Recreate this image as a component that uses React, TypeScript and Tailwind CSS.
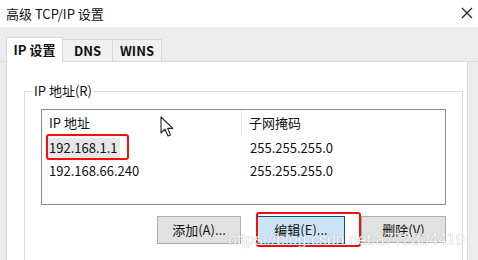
import React from 'react';

const font = { fontFamily: '"Noto Sans CJK SC", "Noto Sans", sans-serif' };

const Cursor: React.FC = () => (
    <svg className="absolute left-[160px] top-[116px]" width="15" height="22" viewBox="0 0 15 22">
        <path d="M1 1 L1 17 L5 13.2 L8 20 L10.5 19 L7.6 12.4 L12.8 12.4 Z" fill="#fff" stroke="#222" strokeWidth="1.1" strokeLinejoin="round" />
    </svg>
);

const App: React.FC = () => {
    return (
        <div className="relative w-[478px] h-[260px] overflow-hidden bg-[#ececec] text-[#111] flex flex-col" style={font}>
            {/* title bar */}
            <header className="h-[27px] shrink-0 bg-white flex items-center justify-between pl-[6px] pr-[4px]">
                <span className="text-[13px] leading-none">高级 TCP/IP 设置</span>
                <svg width="14" height="14" viewBox="0 0 14 14" className="mt-[-2px]">
                    <path d="M2 2 L12 12 M12 2 L2 12" stroke="#222" strokeWidth="1.2" />
                </svg>
            </header>

            {/* tabs */}
            <div className="h-[35px] shrink-0 flex items-end pl-[6px] border-b border-[#d9d9d9] relative z-10">
                <div className="h-[25px] w-[57px] bg-white border border-b-0 border-[#d9d9d9] flex items-center justify-center text-[13px] font-semibold mb-[-1px]">IP 设置</div>
                <div className="h-[22px] w-[50px] bg-[#f0f0f0] border border-l-0 border-b-0 border-[#d9d9d9] flex items-center justify-center text-[13px] font-semibold">DNS</div>
                <div className="h-[22px] w-[49px] bg-[#f0f0f0] border border-l-0 border-b-0 border-[#d9d9d9] flex items-center justify-center text-[13px] font-semibold">WINS</div>
            </div>

            {/* panel */}
            <div className="flex-1 min-h-0 overflow-hidden bg-white ml-[6px] mr-[10px] border-l border-r border-[#d9d9d9] pt-[29px] pl-[17px] pr-[4px]">
                <div className="relative border border-[#dcdcdc] h-[200px] pt-[17px] px-[16px]">
                    <span className="absolute left-[8px] top-[-10px] bg-white px-[1px] text-[13px] leading-[18px]">IP 地址(R)</span>

                    {/* list */}
                    <div className="h-[96px] border border-[#8c8c8c] bg-white text-[13px]">
                        <div className="flex h-[26px] items-center">
                            <div className="w-[200px] pl-[7px] border-r border-[#e5e5e5] h-full flex items-center">IP 地址</div>
                            <div className="pl-[7px]">子网掩码</div>
                        </div>
                        <div className="flex h-[23px] items-center">
                            <div className="w-[201px] pl-[5px]">
                                <span className="inline-block bg-[#e6e6e6] px-[2px] leading-[20px]">192.168.1.1</span>
                            </div>
                            <div className="pl-[7px]">255.255.255.0</div>
                        </div>
                        <div className="flex h-[23px] items-center">
                            <div className="w-[201px] pl-[7px]">192.168.66.240</div>
                            <div className="pl-[7px]">255.255.255.0</div>
                        </div>
                    </div>

                    {/* buttons */}
                    <div className="flex justify-end gap-[16px] mt-[11px] text-[13px]">
                        <button className="w-[84px] h-[28px] bg-[#e1e1e1] border border-[#adadad]">添加(A)...</button>
                        <button className="w-[88px] h-[28px] bg-[#cce4f7] border border-[#005499]">编辑(E)...</button>
                        <button className="w-[85px] h-[27px] bg-[#e1e1e1] border border-[#adadad]">删除(V)</button>
                    </div>
                </div>
            </div>

            {/* annotations */}
            <div className="absolute left-[46px] top-[134px] w-[83px] h-[26px] border-2 border-[#f01010] rounded-[3px]" />
            <div className="absolute left-[256px] top-[212px] w-[105px] h-[35px] border-2 border-[#f01010] rounded-[3px]" />
            <Cursor />

            {/* watermark */}
            <div className="absolute left-[228px] top-[232px] text-[16px] leading-none text-white/90 [text-shadow:0_0_1px_rgba(0,0,0,0.35)]" style={{ fontFamily: '"Liberation Sans", Arial, sans-serif' }}>
                https://blog.csdn.net/a772304419
            </div>
        </div>
    );
};

export default App;
